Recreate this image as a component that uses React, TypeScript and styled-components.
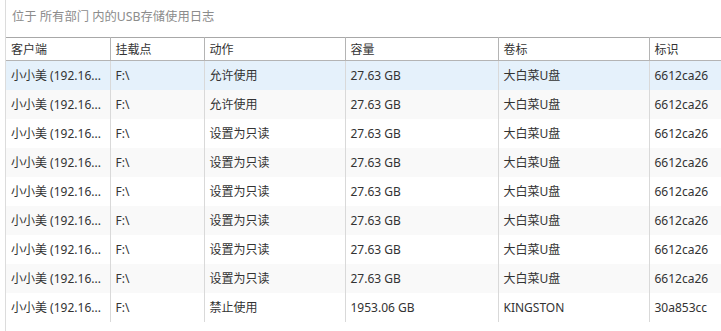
import React from 'react'
import styled, { createGlobalStyle } from 'styled-components'

const GlobalStyle = createGlobalStyle`
  html, body {
    margin: 0;
    padding: 0;
    background: #ffffff;
  }
  body {
    font-family: "Noto Sans", "Noto Sans CJK SC", sans-serif;
    font-size: 12px;
    color: #333333;
  }
`

const Panel = styled.div`
  margin-left: 5px;
  height: 331px;
  border-left: 1px solid #dcdcdc;
  overflow: hidden;
  box-sizing: border-box;
`

const Title = styled.div`
  height: 37px;
  box-sizing: border-box;
  padding: 8px 0 0 6px;
  font-size: 12.3px;
  color: #8c8c8c;
  line-height: 18px;
`

const Table = styled.table`
  border-collapse: collapse;
  table-layout: fixed;
  width: 790px;
  border-top: 1px solid #a8a8a8;
`

const HeadCell = styled.th<{ width: number }>`
  width: ${p => p.width}px;
  height: 23px;
  padding: 0 5px;
  text-align: left;
  font-weight: normal;
  color: #333333;
  border-bottom: 1px solid #b4b4b4;
  border-right: 1px solid #b4b4b4;
  white-space: nowrap;
  box-sizing: border-box;
`

const Row = styled.tr<{ selected?: boolean; alt?: boolean }>`
  height: 29px;
  background: ${p => (p.selected ? '#e5f1fb' : p.alt ? '#f9f9f9' : '#ffffff')};
`

const Cell = styled.td`
  padding: 0 5px;
  border-right: 1px solid #d9d9d9;
  white-space: nowrap;
  color: #333333;
`

const columns = [
  { title: '客户端', width: 104 },
  { title: '挂载点', width: 94 },
  { title: '动作', width: 141 },
  { title: '容量', width: 153 },
  { title: '卷标', width: 151 },
  { title: '标识', width: 147 },
]

// the grid shows the client name already clipped
const client = '小小美 (192.16...'

const rows = [
  ['允许使用', '27.63 GB', '大白菜U盘', '6612ca26'],
  ['允许使用', '27.63 GB', '大白菜U盘', '6612ca26'],
  ['设置为只读', '27.63 GB', '大白菜U盘', '6612ca26'],
  ['设置为只读', '27.63 GB', '大白菜U盘', '6612ca26'],
  ['设置为只读', '27.63 GB', '大白菜U盘', '6612ca26'],
  ['设置为只读', '27.63 GB', '大白菜U盘', '6612ca26'],
  ['设置为只读', '27.63 GB', '大白菜U盘', '6612ca26'],
  ['设置为只读', '27.63 GB', '大白菜U盘', '6612ca26'],
  ['禁止使用', '1953.06 GB', 'KINGSTON', '30a853cc'],
]

export default function App() {
  return (
    <>
      <GlobalStyle />
      <Panel>
        <Title>位于 所有部门 内的USB存储使用日志</Title>
        <Table>
          <thead>
            <tr>
              {columns.map(c => (
                <HeadCell key={c.title} width={c.width}>
                  {c.title}
                </HeadCell>
              ))}
            </tr>
          </thead>
          <tbody>
            {rows.map((r, i) => (
              <Row key={i} selected={i === 0} alt={i % 2 === 1}>
                <Cell>{client}</Cell>
                <Cell>F:\</Cell>
                <Cell>{r[0]}</Cell>
                <Cell>{r[1]}</Cell>
                <Cell>{r[2]}</Cell>
                <Cell>{r[3]}</Cell>
              </Row>
            ))}
          </tbody>
        </Table>
      </Panel>
    </>
  )
}
